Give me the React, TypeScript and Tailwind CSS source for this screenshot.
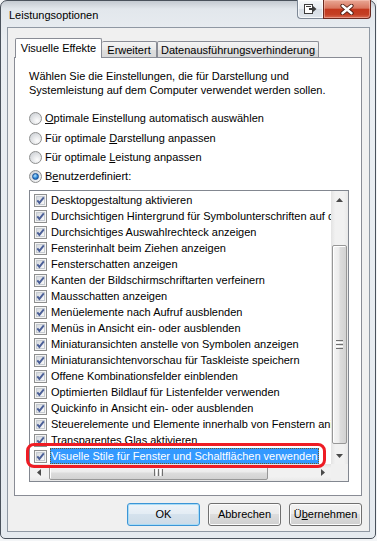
import React from "react";

const items: string[] = [
  "Desktopgestaltung aktivieren",
  "Durchsichtigen Hintergrund für Symbolunterschriften auf dem Desktop",
  "Durchsichtiges Auswahlrechteck anzeigen",
  "Fensterinhalt beim Ziehen anzeigen",
  "Fensterschatten anzeigen",
  "Kanten der Bildschirmschriftarten verfeinern",
  "Mausschatten anzeigen",
  "Menüelemente nach Aufruf ausblenden",
  "Menüs in Ansicht ein- oder ausblenden",
  "Miniaturansichten anstelle von Symbolen anzeigen",
  "Miniaturansichtenvorschau für Taskleiste speichern",
  "Offene Kombinationsfelder einblenden",
  "Optimierten Bildlauf für Listenfelder verwenden",
  "Quickinfo in Ansicht ein- oder ausblenden",
  "Steuerelemente und Elemente innerhalb von Fenstern animieren",
  "Transparentes Glas aktivieren",
  "Visuelle Stile für Fenster und Schaltflächen verwenden",
];

function CheckBox() {
  return (
    <span className="relative flex h-[13px] w-[13px] shrink-0 items-center justify-center border border-[#8e8f8f] bg-[#f4f4f4]">
      <span className="absolute inset-[1px] border border-[#c6cbd1] bg-[linear-gradient(135deg,#d5d9de,#f9f9f9)]" />
      <svg className="relative" width="11" height="11" viewBox="0 0 11 11">
        <path d="M2.3 5.3 L4.4 7.9 L8.8 2.3" fill="none" stroke="#4b5f97" strokeWidth="1.9" />
      </svg>
    </span>
  );
}

function Radio({ checked }: { checked?: boolean }) {
  return (
    <span className="flex h-[13px] w-[13px] shrink-0 items-center justify-center rounded-full border border-[#8e8f8f] bg-[radial-gradient(circle_at_65%_70%,#fdfdfd,#d3d6da_75%)]">
      {checked && (
        <span className="h-[7px] w-[7px] rounded-full border border-[#1b4f93] bg-[radial-gradient(circle_at_40%_35%,#b6e3ff,#2c86d6_55%,#0e4f99)]" />
      )}
    </span>
  );
}

function Tri({ dir }: { dir: "up" | "down" | "left" | "right" }) {
  const vert = dir === "up" || dir === "down";
  const w = vert ? 7 : 4;
  const h = vert ? 4 : 7;
  const pts =
    dir === "up"
      ? "0,4 3.5,0 7,4"
      : dir === "down"
      ? "0,0 3.5,4 7,0"
      : dir === "left"
      ? "4,0 0,3.5 4,7"
      : "0,0 4,3.5 0,7";
  return (
    <svg width={w} height={h} viewBox={`0 0 ${w} ${h}`}>
      <polygon points={pts} fill="#4a4a4a" />
    </svg>
  );
}

function VScroll() {
  return (
    <div className="flex w-[17px] flex-col bg-[linear-gradient(90deg,#e3e3e3,#f1f1f1_25%,#f1f1f1_75%,#e8e8e8)]">
      <div className="flex h-[17px] items-center justify-center">
        <Tri dir="up" />
      </div>
      <div className="flex-1 px-[1px]">
        <div className="mt-[37px] flex h-[199px] items-center justify-center rounded-[2px] border border-[#979797] bg-[linear-gradient(90deg,#f5f5f5,#ececec_45%,#dcdcdc_55%,#d2d2d2)] shadow-[inset_1px_1px_0_#ffffff]">
          <div className="flex flex-col gap-[1px]">
            <span className="block h-[1px] w-[7px] bg-[#707070]" />
            <span className="block h-[1px] w-[7px] bg-[#ffffff]" />
            <span className="block h-[1px] w-[7px] bg-[#707070]" />
            <span className="block h-[1px] w-[7px] bg-[#ffffff]" />
            <span className="block h-[1px] w-[7px] bg-[#707070]" />
          </div>
        </div>
      </div>
      <div className="flex h-[17px] items-center justify-center">
        <Tri dir="down" />
      </div>
    </div>
  );
}

function HScroll() {
  return (
    <div className="flex w-[301px] bg-[linear-gradient(180deg,#e3e3e3,#f1f1f1_25%,#f1f1f1_75%,#e8e8e8)]">
      <div className="flex w-[17px] items-center justify-center">
        <Tri dir="left" />
      </div>
      <div className="flex-1 py-[1px]">
        <div className="ml-[2px] flex h-full w-[219px] items-center justify-center rounded-[2px] border border-[#979797] bg-[linear-gradient(180deg,#f5f5f5,#ececec_45%,#dcdcdc_55%,#d2d2d2)] shadow-[inset_1px_1px_0_#ffffff]">
          <div className="flex gap-[1px]">
            <span className="block h-[7px] w-[1px] bg-[#707070]" />
            <span className="block h-[7px] w-[1px] bg-[#ffffff]" />
            <span className="block h-[7px] w-[1px] bg-[#707070]" />
            <span className="block h-[7px] w-[1px] bg-[#ffffff]" />
            <span className="block h-[7px] w-[1px] bg-[#707070]" />
          </div>
        </div>
      </div>
      <div className="flex w-[17px] items-center justify-center">
        <Tri dir="right" />
      </div>
    </div>
  );
}

export default function App() {
  return (
    <div className="relative h-[541px] w-[377px] overflow-hidden bg-[#f3f5f7] font-['Liberation_Sans',Arial,sans-serif] text-[11px] text-black">
      <div className="flex h-[539px] w-[376px] flex-col rounded-t-[7px] rounded-b-[5px] border border-[#4a525c] bg-[linear-gradient(180deg,#c4cad1_0px,#e2e7ec_8px,#eaeef2_40px,#e5eaef_100%)] pb-[6px] pl-[6px] pr-[5px]">
        {/* title bar */}
        <div className="flex h-[26px] shrink-0 items-start">
          <div className="ml-[2px] mt-[7px] leading-[15px]">Leistungsoptionen</div>
          <div className="-mr-px -mt-px ml-auto flex">
            <div className="flex h-[19px] w-[26px] items-center justify-center rounded-bl-[4px] border border-r-0 border-t-0 border-[#7d8896] bg-[linear-gradient(180deg,#f6f8fa,#e6ebf0_50%,#d5dce4_50%,#dfe5eb)] shadow-[inset_0_0_0_1px_rgba(255,255,255,0.7)]">
              <svg width="13" height="10" viewBox="0 0 13 10">
                <rect x="0.5" y="0.5" width="8" height="9" fill="#ffffff" stroke="#3c3c3c" />
                <rect x="2" y="2" width="5" height="1" fill="#3c3c3c" />
                <path d="M5 4 H9 V2 L12.5 5 L9 8 V6 H5 Z" fill="#3c3c3c" />
              </svg>
            </div>
            <div className="flex h-[19px] w-[48px] items-center justify-center rounded-br-[4px] border border-t-0 border-[#6b2a20] bg-[linear-gradient(180deg,#e9a895_0%,#d9765f_45%,#c3381d_52%,#c43f23_80%,#d96a52_100%)] shadow-[inset_0_0_0_1px_rgba(255,210,200,0.45)]">
              <svg width="14" height="11" viewBox="0 0 14 11">
                <path d="M2.5 1.8 L11.5 9.2 M11.5 1.8 L2.5 9.2" stroke="#4a1a10" strokeWidth="4.2" strokeLinecap="round" />
                <path d="M2.5 1.8 L11.5 9.2 M11.5 1.8 L2.5 9.2" stroke="#ffffff" strokeWidth="2.4" strokeLinecap="round" />
              </svg>
            </div>
          </div>
        </div>

        {/* client area */}
        <div className="flex flex-1 flex-col border border-[#8f98a3] bg-[#f0f0f0] pl-[6px] pr-[7px] pt-[10px]">
          {/* tabs */}
          <div className="relative z-10 flex h-[19px] items-end pl-[1px]">
            <div className="-mb-px flex h-[20px] w-[87px] items-center justify-center rounded-t-[2px] border border-b-0 border-[#898c95] bg-white">
              Visuelle Effekte
            </div>
            <div className="flex h-[16px] w-[55px] items-center justify-center rounded-t-[2px] border border-b-0 border-l-0 border-[#898c95] bg-[linear-gradient(180deg,#f4f4f4,#e9e9e9_50%,#dedede_50%,#d9d9d9)] pt-[1px]">
              Erweitert
            </div>
            <div className="flex h-[16px] w-[162px] items-center justify-center rounded-t-[2px] border border-b-0 border-[#898c95] bg-[linear-gradient(180deg,#f4f4f4,#e9e9e9_50%,#dedede_50%,#d9d9d9)] pt-[1px]">
              Datenausführungsverhinderung
            </div>
          </div>

          {/* panel */}
          <div className="flex h-[439px] flex-col border border-[#898c95] bg-white pl-[14px] pr-[12px] pt-[11px]">
            <p className="leading-[14px]">
              Wählen Sie die Einstellungen, die für Darstellung und
              <br />
              Systemleistung auf dem Computer verwendet werden sollen.
            </p>
            <div className="mt-[11px] flex flex-col">
              <div className="flex h-[20px] items-center gap-[3px]">
                <Radio />
                <span>
                  <u>O</u>ptimale Einstellung automatisch auswählen
                </span>
              </div>
              <div className="flex h-[20px] items-center gap-[3px]">
                <Radio />
                <span>
                  Für optimale <u>D</u>arstellung anpassen
                </span>
              </div>
              <div className="flex h-[19px] items-center gap-[3px]">
                <Radio />
                <span>
                  Für optimale <u>L</u>eistung anpassen
                </span>
              </div>
              <div className="flex h-[19px] items-center gap-[3px]">
                <Radio checked />
                <span>
                  B<u>e</u>nutzerdefiniert:
                </span>
              </div>
            </div>

            {/* list box */}
            <div className="mt-[4px] flex h-[292px] w-[320px] flex-col border border-[#828790] bg-white">
              <div className="flex h-[273px]">
                <div className="w-[301px] overflow-hidden pt-[1px]">
                  {items.map((t, i) => {
                    const sel = i === items.length - 1;
                    return (
                      <div key={t} className="flex h-[16px] items-center gap-[3px] whitespace-nowrap pl-[4px]">
                        <CheckBox />
                        <span
                          className={
                            sel
                              ? "border border-dotted border-[#6b5a2c] bg-[#3399ff] pr-[1px] leading-[14px] text-white"
                              : "px-[1px] leading-[14px]"
                          }
                        >
                          {t}
                        </span>
                      </div>
                    );
                  })}
                </div>
                <VScroll />
              </div>
              <div className="flex h-[17px]">
                <HScroll />
                <div className="w-[17px] bg-[#f0f0f0]" />
              </div>
            </div>
          </div>

          {/* buttons */}
          <div className="mt-[7px] flex justify-end gap-[8px]">
            <button className="flex h-[23px] w-[73px] items-center justify-center rounded-[3px] border border-[#3c95d6] bg-[linear-gradient(180deg,#eef4f9,#e3ecf4_50%,#d5e2ed_50%,#cddbe7)] shadow-[inset_0_0_0_1px_#a9dcf6] text-[11px]">
              OK
            </button>
            <button className="flex h-[23px] w-[73px] items-center justify-center rounded-[3px] border border-[#707070] bg-[linear-gradient(180deg,#f2f2f2,#ebebeb_50%,#dddddd_50%,#cfcfcf)] shadow-[inset_0_0_0_1px_#fcfcfc] text-[11px]">
              Abbrechen
            </button>
            <button className="flex h-[23px] w-[73px] items-center justify-center rounded-[3px] border border-[#707070] bg-[linear-gradient(180deg,#f2f2f2,#ebebeb_50%,#dddddd_50%,#cfcfcf)] shadow-[inset_0_0_0_1px_#fcfcfc] text-[11px]">
              <span>
                Ü<u>b</u>ernehmen
              </span>
            </button>
          </div>
        </div>
      </div>

      {/* red annotation */}
      <div className="absolute left-[26px] top-[443px] h-[25px] w-[300px] rounded-[8px] border-[3px] border-[#ee1c24]" />
    </div>
  );
}
